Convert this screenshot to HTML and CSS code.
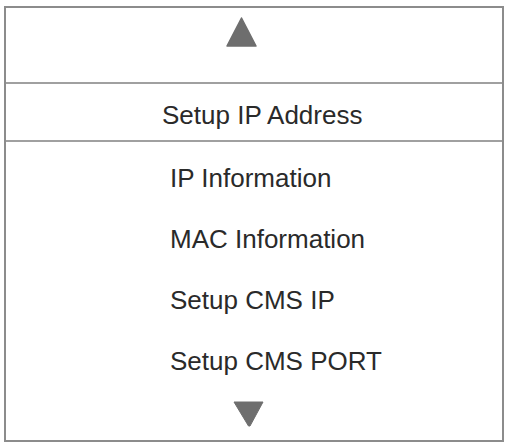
FILE: index.html
```html
<!DOCTYPE html>
<html>
<head>
<meta charset="utf-8">
<link rel="stylesheet" href="styles.css">
</head>
<body>
<div class="menu">
  <div class="top">
    <svg class="arrow-up" width="31" height="30" viewBox="0 0 31 30"><path d="M15.5 1 L30 29 L1 29 Z" fill="#6e6e6e" stroke="#6e6e6e" stroke-width="1.5" stroke-linejoin="round"/></svg>
  </div>
  <div class="title">Setup IP Address</div>
  <div class="list">
    <div class="item">IP Information</div>
    <div class="item">MAC Information</div>
    <div class="item">Setup CMS IP</div>
    <div class="item">Setup CMS PORT</div>
    <svg class="arrow-down" width="31" height="26" viewBox="0 0 31 26"><path d="M1 1 L30 1 L17 25 L15.5 25 Z" fill="#6e6e6e" stroke="#6e6e6e" stroke-width="1" stroke-linejoin="round"/></svg>
  </div>
</div>
</body>
</html>
```
FILE: styles.css
```css
html, body {
  margin: 0;
  padding: 0;
  background: #ffffff;
}
body {
  font-family: "Liberation Sans", Arial, sans-serif;
  color: #2a2a2a;
}
.menu {
  box-sizing: border-box;
  margin: 6px 0 0 4px;
  width: 500px;
  height: 436px;
  border: 2px solid #8c8c8c;
  display: flex;
  flex-direction: column;
}
.top {
  box-sizing: border-box;
  height: 76px;
  padding: 9px 0 0 220px;
  border-bottom: 2px solid #a0a0a0;
}
.arrow-up {
  display: block;
}
.title {
  box-sizing: border-box;
  height: 58px;
  padding: 17px 0 0 156px;
  font-size: 26px;
  line-height: 28px;
  border-bottom: 2px solid #a0a0a0;
}
.list {
  flex: 1;
  padding-top: 6px;
  display: flex;
  flex-direction: column;
}
.item {
  padding-left: 164px;
  font-size: 26px;
  line-height: 61px;
}
.arrow-down {
  display: block;
  margin: 9px 0 0 227px;
}
```
